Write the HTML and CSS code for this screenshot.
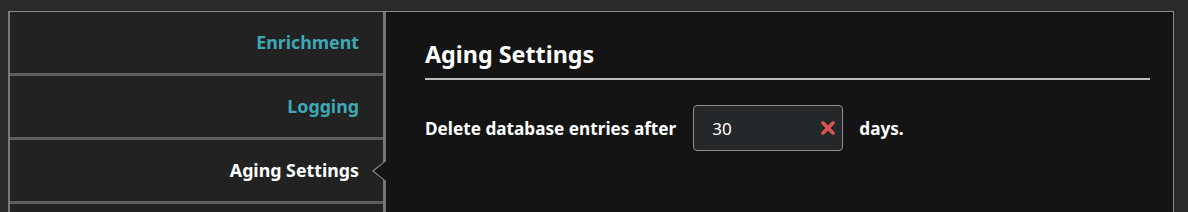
FILE: index.html
```html
<!DOCTYPE html>
<html>
<head>
<meta charset="utf-8">
<link rel="stylesheet" href="styles.css">
</head>
<body>
<div class="frame">
  <nav class="nav">
    <a class="nav-item">Enrichment</a>
    <a class="nav-item">Logging</a>
    <a class="nav-item active">Aging Settings</a>
  </nav>
  <main class="panel">
    <h2 class="title">Aging Settings</h2>
    <div class="row">
      <span class="label">Delete database entries after</span>
      <div class="field">
        <span class="value">30</span>
        <svg class="clear" width="16" height="16" viewBox="0 0 16 16"><path d="M3 3 L13 13 M13 3 L3 13" stroke="#d9534f" stroke-width="3.6" stroke-linecap="round"/></svg>
      </div>
      <span class="label">days.</span>
    </div>
  </main>
</div>
</body>
</html>
```
FILE: styles.css
```css
html, body { margin: 0; padding: 0; }
body {
  background: #2a2a2a;
  font-family: "Noto Sans", "Open Sans", sans-serif;
  height: 212px;
  overflow: hidden;
}
.frame {
  display: flex;
  margin: 11px 0 0 8px;
  width: 1163px;
  height: 201px;
  border-top: 1px solid #8a8a8a;
  border-left: 2px solid #7a7a7a;
  border-right: 1px solid #8a8a8a;
  background: #141414;
}
.nav {
  width: 373px;
  flex: none;
  background: #222222;
  border-right: 3px solid #777777;
  display: flex;
  flex-direction: column;
}
.nav-item {
  position: relative;
  height: 60px;
  padding-bottom: 1px;
  border-bottom: 3px solid #5e5e5e;
  display: flex;
  align-items: center;
  justify-content: flex-end;
  padding-right: 24px;
  color: #3fa8b6;
  font-weight: 700;
  font-size: 17.8px;
}
.nav-item.active { color: #ffffff; }
.nav-item.active::before,
.nav-item.active::after {
  content: "";
  position: absolute;
  top: 50%;
  width: 0;
  height: 0;
  border-style: solid;
  border-color: transparent;
}
.nav-item.active::before {
  right: -3px;
  margin-top: -11px;
  border-width: 11px 14px 11px 0;
  border-right-color: #8a8a8a;
}
.nav-item.active::after {
  right: -3px;
  margin-top: -10px;
  border-width: 10px 12px 10px 0;
  border-right-color: #141414;
}
.panel {
  flex: 1;
  padding: 0 23px 0 39px;
  color: #ffffff;
}
.title {
  margin: 27px 0 0 0;
  font-size: 23.3px;
  font-weight: 700;
  line-height: 30px;
  padding-bottom: 9px;
  border-bottom: 2px solid #bdbdbd;
}
.row {
  display: flex;
  align-items: center;
  margin-top: 25px;
  gap: 16px;
}
.label {
  font-size: 17.2px;
  font-weight: 700;
}
.field {
  border: 1px solid #8c8c8c;
  border-radius: 4px;
  background: #25282b;
  display: flex;
  align-items: center;
  justify-content: space-between;
  padding: 0 6px 0 18px;
  box-sizing: border-box;
  width: 150px;
  height: 46px;
  margin-left: 1px;
}
.value {
  font-size: 17px;
  color: #ffffff;
}
.clear { display: block; }
```
